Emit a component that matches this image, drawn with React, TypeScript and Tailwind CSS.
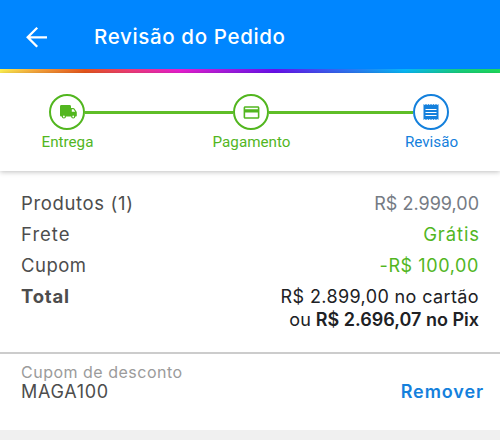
import type { ReactNode } from "react";
import { MdOutlinePayment } from "react-icons/md";

function BackArrow() {
  return (
    <svg width="30" height="30" viewBox="0 0 30 30" fill="none" stroke="currentColor" strokeWidth="2.3">
      <path d="M25 15.3H6M15.2 5.8 5.7 15.3l9.5 9.5" />
    </svg>
  );
}

function TruckIcon() {
  return (
    <svg className="ml-0.5" width="17" height="14" viewBox="0 0 17 14" fill="currentColor">
      <path
        fillRule="evenodd"
        d="M1.4 0h8.2Q11 0 11 1.4V3h2.3q.7 0 1.1.6l2 2.8q.4.5.4 1.2v3q0 .9-.9.9h-.6a2.1 2.1 0 0 1-4.2 0H6a2.1 2.1 0 0 1-4.2 0h-.6Q0 11.5 0 10.3V1.4Q0 0 1.4 0ZM11.8 4.2v2.5h3.4l-1.7-2.500ZM3.9 10.6a.9.9 0 1 0 0 1.800a.9.9 0 0 0 0-1.800ZM13.200 10.600a.9.9 0 1 0 0 1.800a.9.9 0 0 0 0-1.800Z"
      />
    </svg>
  );
}

function ReceiptIcon() {
  return (
    <svg width="16" height="16" viewBox="0 0 16 16" fill="currentColor">
      <path d="m.5 0 1.250 1L3 0l1.250 1L5.500 0l1.250 1L8 0l1.250 1L10.500 0l1.250 1L13 0l1.250 1L15.500 0v16l-1.250-1-1.250 1-1.250-1-1.250 1-1.250-1L8 16l-1.250-1-1.250 1-1.250-1L3 16l-1.250-1L.5 16Z" />
      <path d="M2.500 5.500h11M2.500 8.500h11M2.500 11.500h11" stroke="white" strokeWidth="1" />
    </svg>
  );
}

function Step({ icon, label, active = false }: { icon: ReactNode; label: string; active?: boolean }) {
  return (
    <li
      className={`flex w-9 shrink-0 flex-col items-center ${active ? "text-[#1480dc]" : "text-[#52b61f]"}`}
    >
      <span className="flex size-9 items-center justify-center rounded-full border-2 border-current bg-white">
        {icon}
      </span>
      <span className="mt-[2px] ml-px whitespace-nowrap font-['Roboto',sans-serif] text-[15.2px] leading-5">
        {label}
      </span>
    </li>
  );
}

function Row({ label, children }: { label: ReactNode; children: ReactNode }) {
  return (
    <div className="flex h-[31px] items-center justify-between">
      <dt>{label}</dt>
      <dd>{children}</dd>
    </div>
  );
}

export default function App() {
  return (
    <div className="flex h-[440px] w-[500px] flex-col bg-[#f0f0f0] font-['Inter',sans-serif] text-[18px] text-[#4d4d4d]">
      <header className="flex h-[69px] shrink-0 items-center bg-[#0086ff] pt-[5px] pl-[22px] text-white">
        <button type="button" aria-label="Voltar">
          <BackArrow />
        </button>
        <h1 className="ml-[42px] text-[20.5px] font-medium tracking-[0.65px]">Revisão do Pedido</h1>
      </header>
      <div className="h-1 shrink-0 bg-[linear-gradient(90deg,#fff04f_0%,#f8a83c_7%,#e8561c_17%,#f03c78_26%,#e91ed0_36%,#a01be0_46%,#6a10ee_55%,#3763f2_67%,#08b9f7_81%,#18d07c_92%,#1edc5c_100%)]" />

      <section className="relative h-[98px] shrink-0 bg-white pt-[21px] pr-[51px] pl-[49px] shadow-[0_1px_5px_rgba(0,0,0,0.25)]">
        <ol className="flex">
          <Step icon={<TruckIcon />} label="Entrega" />
          <li className="mt-[17px] h-[2.5px] w-[148px] bg-[#5fbe28]" />
          <Step icon={<MdOutlinePayment size={19} />} label="Pagamento" />
          <li className="mt-[17px] h-[2.5px] flex-1 bg-[#5fbe28]" />
          <Step icon={<ReceiptIcon />} label="Revisão" active />
        </ol>
      </section>

      <section className="h-[181px] shrink-0 bg-white pt-[17px] pr-[21px] pl-[21px]">
        <dl>
          <Row label={<span className="text-[18.5px] tracking-[0.65px]">Produtos (1)</span>}>
            <span className="text-[#757b84]">R$ 2.999,00</span>
          </Row>
          <Row label={<span className="text-[18.5px] tracking-[1px]">Frete</span>}>
            <span className="-mr-px text-[18.5px] tracking-[0.9px] text-[#52b61f]">Grátis</span>
          </Row>
          <Row label={<span className="text-[18.5px] tracking-[0.5px]">Cupom</span>}>
            <span className="tracking-[0.6px] text-[#52b61f]">-R$ 100,00</span>
          </Row>
          <Row label={<b className="text-[18.5px] tracking-[0.8px]">Total</b>}>
            <span className="tracking-[0.38px] text-[#202124]">R$ 2.899,00 no cartão</span>
          </Row>
        </dl>
        <p className="-mt-1 text-right leading-[23px] text-[#202124]">
          ou <b className="font-semibold">R$ 2.696,07 no Pix</b>
        </p>
      </section>

      <section className="flex h-[78px] shrink-0 justify-between border-t-2 border-[#cccccc] bg-white pt-[8px] pr-[16px] pl-[21px]">
        <div>
          <p className="text-[16px] leading-5 tracking-[0.5px] text-[#9b9b9b]">Cupom de desconto</p>
          <p className="leading-5 tracking-[0.7px]">MAGA100</p>
        </div>
        <button type="button" className="mt-5 h-5 leading-5 font-semibold tracking-[0.9px] text-[#1480dc]">
          Remover
        </button>
      </section>
    </div>
  );
}
